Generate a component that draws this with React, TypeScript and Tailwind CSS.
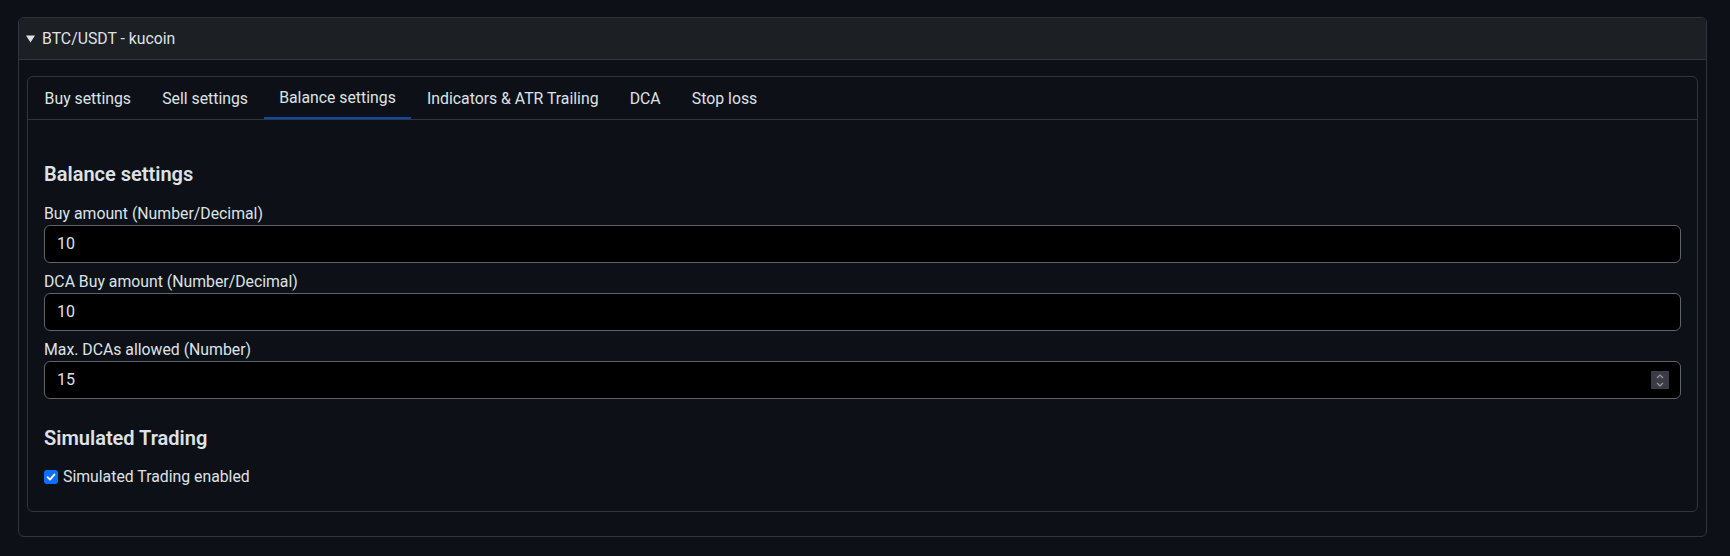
import { useState } from "react";

const tabs = [
  "Buy settings",
  "Sell settings",
  "Balance settings",
  "Indicators & ATR Trailing",
  "DCA",
  "Stop loss",
];

function Field({ label, value, spinner }: { label: string; value: string; spinner?: boolean }) {
  return (
    <div className="flex flex-col">
      <label className="leading-6 pt-[2px] -mb-px">{label}</label>
      <div className="flex items-center h-[38px] bg-black border border-[#5c636a] rounded-[6px] pl-3 pr-[11px]">
        <input
          className="flex-1 bg-transparent outline-none text-[#dee2e6] text-[16px]"
          defaultValue={value}
        />
        {spinner && (
          <span className="flex flex-col items-center justify-center gap-[3px] w-[18px] h-[18px] bg-[#3b3b45]">
            <svg width="8" height="5" viewBox="0 0 8 5" fill="none">
              <path d="M1 4L4 1L7 4" stroke="#9a9aa3" strokeWidth="1.2" />
            </svg>
            <svg width="8" height="5" viewBox="0 0 8 5" fill="none">
              <path d="M1 1L4 4L7 1" stroke="#9a9aa3" strokeWidth="1.2" />
            </svg>
          </span>
        )}
      </div>
    </div>
  );
}

export default function App() {
  const [active, setActive] = useState(2);

  return (
    <div className="min-h-[556px] bg-[#0d1117] text-[#dee2e6] pl-[18px] pr-[23px] pt-[17px] pb-5 font-['Roboto','Segoe_UI',sans-serif] text-[15.8px]">
      <div className="border border-[#30363d] rounded-[6px]">
        <div className="flex items-center h-[42px] bg-[#1c1f24] border-b border-[#30363d] rounded-t-[6px] pl-[7px] text-[15.8px]">
          <svg width="9" height="8" viewBox="0 0 9 8" className="mr-[7px] mt-px">
            <path d="M0 0.5H9L4.5 7.5Z" fill="#dee2e6" />
          </svg>
          <span>BTC/USDT - kucoin</span>
        </div>
        <div className="pt-4 px-2 pb-6">
          <div className="border border-[#30363d] rounded-[6px]">
            <div className="flex h-[43px] border-b border-[#30363d] pl-px">
              {tabs.map((t, i) => (
                <button
                  key={t}
                  onClick={() => setActive(i)}
                  className={
                    i === active
                      ? "px-[15.6px] h-full border-b-2 border-[#0b4aa6] -mb-px pt-px text-[#dee2e6]"
                      : "px-[15.6px] h-full text-[#dee2e6] pt-px"
                  }
                >
                  {t}
                </button>
              ))}
            </div>
            <div className="px-4 pt-[42px] pb-[22px]">
              <h2 className="text-[20px] font-semibold leading-6 mb-[14px]">Balance settings</h2>
              <div className="flex flex-col gap-[5px]">
                <Field label="Buy amount (Number/Decimal)" value="10" />
                <Field label="DCA Buy amount (Number/Decimal)" value="10" />
                <Field label="Max. DCAs allowed (Number)" value="15" spinner />
              </div>
              <h2 className="text-[20px] font-semibold leading-6 mt-[27px] mb-[15px]">Simulated Trading</h2>
              <label className="flex items-center leading-6">
                <span className="flex items-center justify-center w-[14px] h-[14px] rounded-[3px] bg-[#0d6efd] mr-[5px]">
                  <svg width="10" height="10" viewBox="0 0 10 10" fill="none">
                    <path d="M1.5 5.2L4 7.6L8.5 2.4" stroke="white" strokeWidth="1.8" strokeLinecap="round" strokeLinejoin="round" />
                  </svg>
                </span>
                Simulated Trading enabled
              </label>
            </div>
          </div>
        </div>
      </div>
    </div>
  );
}
